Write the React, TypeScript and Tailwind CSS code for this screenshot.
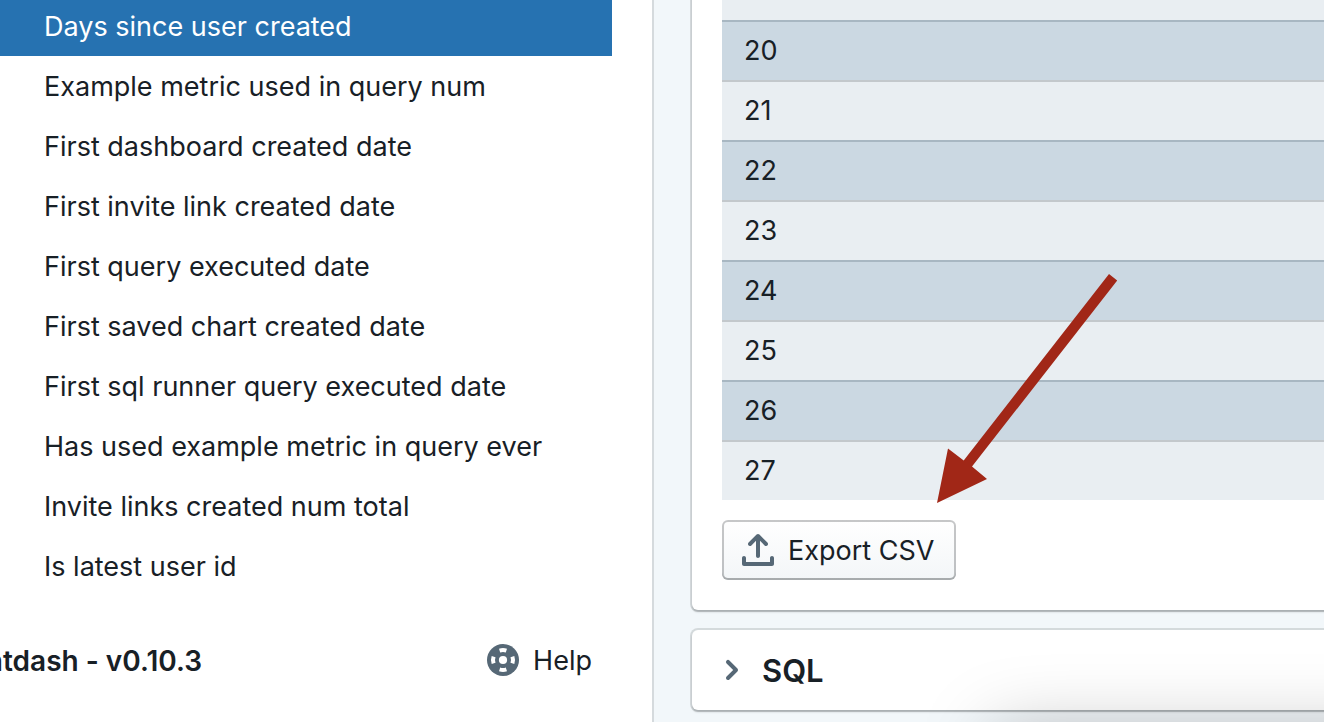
import React, { useState } from "react";

const fields = [
  "Days since user created",
  "Example metric used in query num",
  "First dashboard created date",
  "First invite link created date",
  "First query executed date",
  "First saved chart created date",
  "First sql runner query executed date",
  "Has used example metric in query ever",
  "Invite links created num total",
  "Is latest user id",
];

const rows = [19, 20, 21, 22, 23, 24, 25, 26, 27];

const cardShadow = "shadow-[0_0_0_2px_rgba(16,22,26,0.13),0_2px_2px_rgba(16,22,26,0.22)]";

const ExportIcon = () => (
  <svg className="size-8 shrink-0" viewBox="0 0 16 16" fill="#566876" aria-hidden="true">
    <path d="M4 6c.28 0 .53-.11.71-.29L7 3.41V11c0 .55.45 1 1 1s1-.45 1-1V3.41l2.29 2.29c.18.19.43.3.71.3a1.003 1.003 0 00.71-1.71l-4-4C8.53.11 8.28 0 8 0s-.53.11-.71.29l-4 4A1.003 1.003 0 004 6zm11 5c-.55 0-1 .45-1 1v2H2v-2c0-.55-.45-1-1-1s-1 .45-1 1v3c0 .55.45 1 1 1h14c.55 0 1-.45 1-1v-3c0-.55-.45-1-1-1z" />
  </svg>
);

const ChevronIcon = () => (
  <svg className="size-8 shrink-0" viewBox="0 0 16 16" fill="#566876" aria-hidden="true">
    <path d="M10.71 7.29l-4-4a1.003 1.003 0 00-1.42 1.42L8.59 8 5.3 11.29c-.19.18-.3.43-.3.71a1.003 1.003 0 001.71.71l4-4c.18-.18.29-.43.29-.71 0-.28-.11-.53-.29-.71z" />
  </svg>
);

const HelpIcon = () => (
  <svg className="size-8 shrink-0" viewBox="-8 -8 16 16" aria-hidden="true">
    <circle r="8" fill="#566876" />
    <circle r="2.05" fill="#fff" />
    {[0, 90, 180, 270].map((angle) => (
      <path
        key={angle}
        transform={`rotate(${angle})`}
        fill="#fff"
        d="M-2 -5.66A6 6 0 0 1 2 -5.66L1.4 -3.75A4 4 0 0 0 -1.4 -3.75Z"
      />
    ))}
  </svg>
);

const Sidebar = () => {
  const [selected, setSelected] = useState(fields[0]);

  return (
    <aside className="w-[654px] shrink-0 border-r-2 border-[#d5dadd] bg-white pr-10">
      <ul className="-mt-1">
        {fields.map((field) => (
          <li key={field}>
            <button
              type="button"
              onClick={() => setSelected(field)}
              className={`flex h-15 w-full items-center pl-11 pt-0.5 text-left ${
                selected === field ? "bg-[#2672b1] text-white" : ""
              }`}
            >
              {field}
            </button>
          </li>
        ))}
      </ul>
      <div className="mt-8 flex h-16 items-center justify-between pr-5">
        <div className="flex w-[202px] justify-end whitespace-nowrap pt-0.5 text-[28px] font-semibold">
          Lightdash - v0.10.3
        </div>
        <a href="#help" className="flex items-center gap-3.5">
          <HelpIcon />
          <span className="pt-0.5">Help</span>
        </a>
      </div>
    </aside>
  );
};

const Results = () => (
  <section className={`-mt-10 rounded-md bg-white pb-[30px] pl-[30px] ${cardShadow}`}>
    <div className="relative">
      <table className="w-full border-collapse">
        <tbody>
          {rows.map((row) => (
            <tr
              key={row}
              className="h-15 bg-[#e9eef2] shadow-[inset_0_2px_0_#c3c8cc] even:bg-[#cbd8e2] even:shadow-[inset_0_2px_0_#a8b7c2]"
            >
              <td className="pl-[22px] pt-0.5">{row}</td>
            </tr>
          ))}
        </tbody>
      </table>
      {/* pointer to the export button */}
      <svg
        className="pointer-events-none absolute left-[215px] -bottom-1 h-[230px] w-[181px]"
        viewBox="0 0 181 230"
        fill="#a12717"
        aria-hidden="true"
      >
        <path d="M172 0L180.200 6.500L35 192.500L50 205L0 229L11 174.500L26.700 186.500Z" />
      </svg>
    </div>
    <button
      type="button"
      className="mt-5 flex h-15 items-center gap-3.5 rounded-md bg-linear-to-b from-white to-[#f3f6f8] pl-5 pr-[22px] shadow-[inset_0_0_0_2px_rgba(16,22,26,0.24),inset_0_-2px_0_rgba(16,22,26,0.12)]"
    >
      <ExportIcon />
      <span className="pt-0.5">Export CSV</span>
    </button>
  </section>
);

const SqlPanel = () => (
  <section className={`flex h-20 items-center rounded-md bg-white pl-6 ${cardShadow}`}>
    <button type="button" className="flex items-center gap-3.5 text-[31px] font-semibold">
      <ChevronIcon />
      <h2 className="pt-0.5">SQL</h2>
    </button>
  </section>
);

const App = () => {
  return (
    <div className="relative flex h-screen overflow-hidden bg-[#f2f7fa] font-['Inter','Liberation_Sans',sans-serif] text-[27px] text-[#182026]">
      <Sidebar />
      <main className="-mr-10 flex min-w-0 flex-1 flex-col gap-5 pl-[38px]">
        <Results />
        <SqlPanel />
      </main>
      <div className="pointer-events-none absolute -right-50 left-3/4 top-full h-50 shadow-[0_8px_72px_rgba(0,0,0,0.25)]" />
    </div>
  );
};

export default App;
